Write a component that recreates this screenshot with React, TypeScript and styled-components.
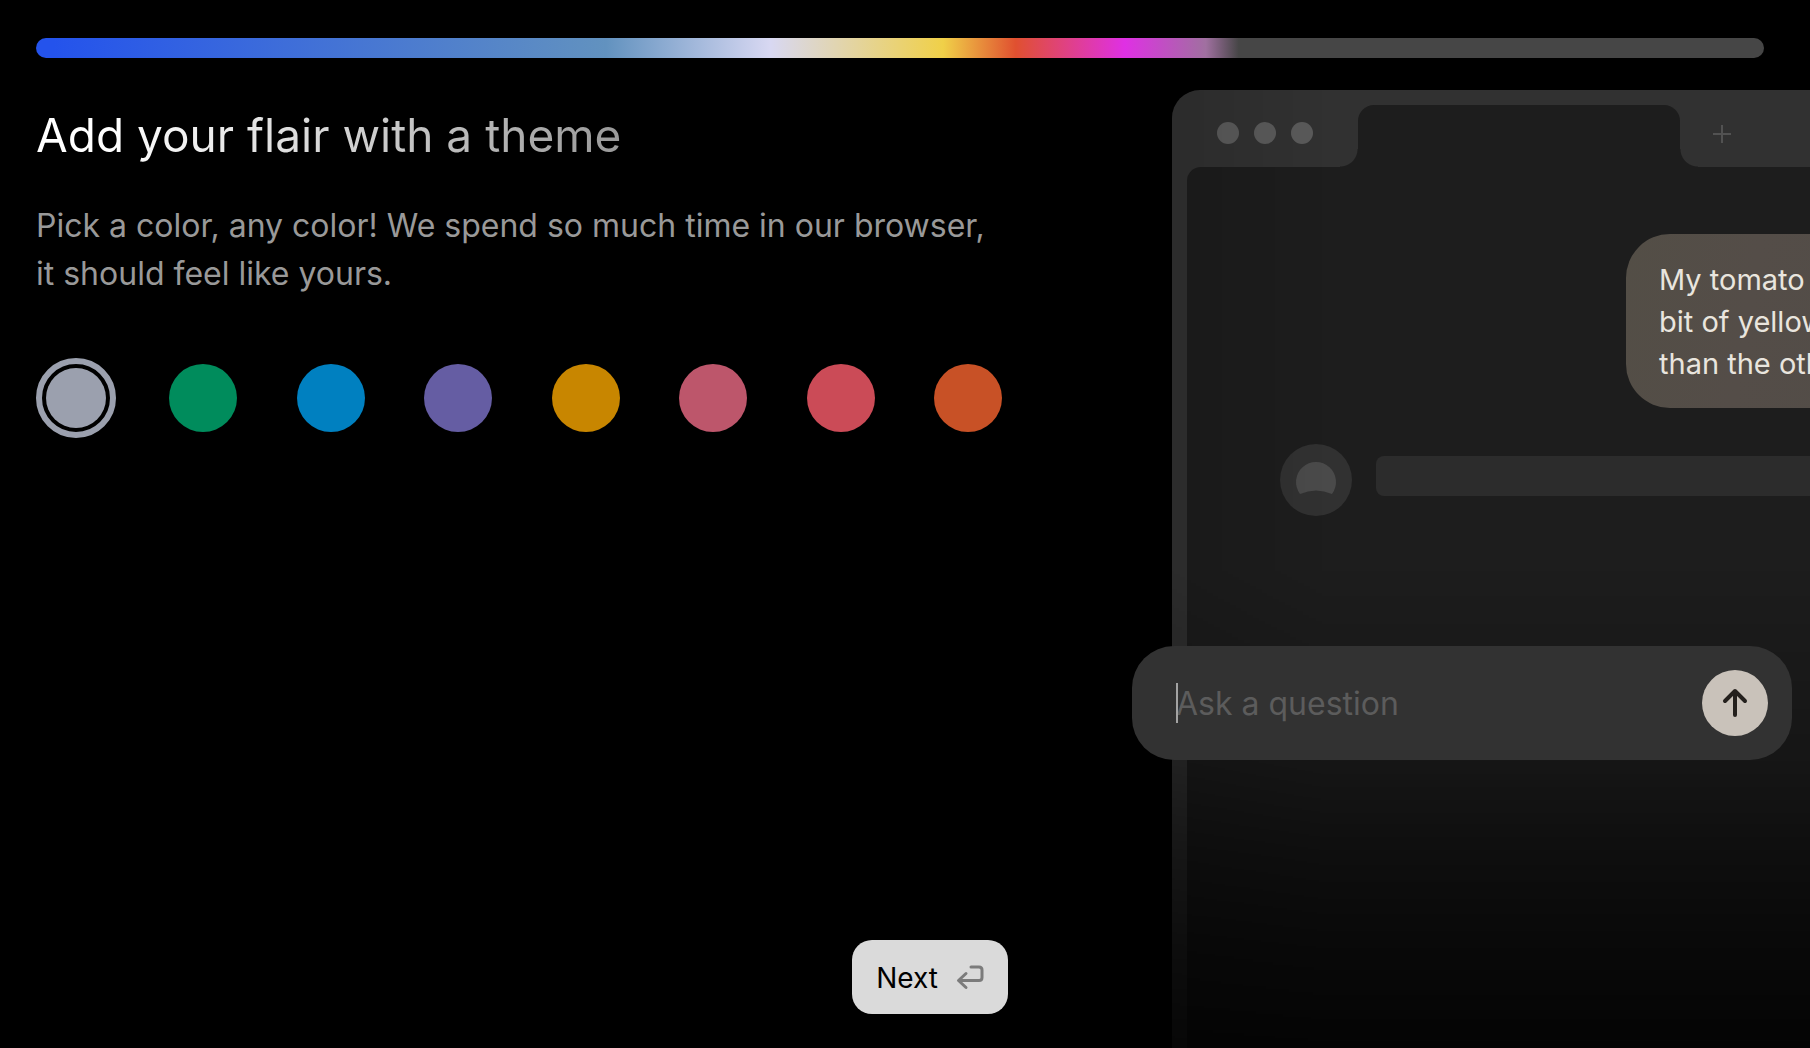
import React, { useState } from "react";
import styled, { createGlobalStyle } from "styled-components";

const GlobalStyle = createGlobalStyle`
  *, *::before, *::after { box-sizing: border-box; }
  body {
    margin: 0;
    background: #000;
    color: #fff;
    font-family: Inter, "Liberation Sans", sans-serif;
  }
  button, input { font: inherit; }
`;

const Page = styled.div`
  display: flex;
  flex-direction: column;
  min-height: 100vh;
  overflow: hidden;
  background: #000;
`;

const Header = styled.header`
  padding: 38px 46px 0 36px;
`;

const Progress = styled.div`
  height: 20px;
  border-radius: 10px;
  background: linear-gradient(
    90deg,
    #2453ec 1%,
    #6292bf 33%,
    #d8d8f2 42.5%,
    #f0d048 52.5%,
    #e05030 56.7%,
    #df30e4 63%,
    #a070a0 67.7%,
    #464646 69.6%
  );
`;

const Main = styled.main`
  flex: 1;
  display: grid;
  grid-template-columns: minmax(0, 972fr) minmax(0, 638fr);
  column-gap: 164px;
  padding: 32px 0 0 36px;
`;

const Intro = styled.section`
  display: flex;
  flex-direction: column;
  align-items: flex-start;
  padding: 16px 0 34px;
`;

const Title = styled.h1`
  margin: 0;
  font-size: 46px;
  line-height: 58px;
  font-weight: 400;
  color: transparent;
  background: linear-gradient(90deg, #fff 12%, #dcdcdc 45%, #999 100%);
  background-clip: text;
`;

const Lead = styled.p`
  margin: 38px 0 60px;
  font-size: 32px;
  line-height: 48px;
  color: #999;
`;

const Swatches = styled.fieldset`
  display: flex;
  justify-content: space-between;
  width: 100%;
  margin: 0;
  padding: 0;
  border: 0;
`;

const SwatchLabel = styled.label`
  display: flex;
  align-items: center;
  justify-content: center;
  width: 80px;
  height: 80px;
  cursor: pointer;
`;

const SwatchInput = styled.input<{ $color: string }>`
  appearance: none;
  width: 68px;
  height: 68px;
  margin: 0;
  border-radius: 50%;
  background: ${(p) => p.$color};

  &:checked {
    width: 80px;
    height: 80px;
    padding: 4px;
    border: 6px solid ${(p) => p.$color};
    background-clip: content-box;
  }
`;

const NextButton = styled.button`
  display: flex;
  align-items: center;
  gap: 18px;
  align-self: flex-end;
  height: 74px;
  margin-top: auto;
  padding: 2px 24px 0;
  border: 0;
  border-radius: 20px;
  background: #dadada;
  color: #000;
  font-size: 28px;
  line-height: 36px;
`;

const Preview = styled.section`
  position: relative;
  display: flex;
  flex-direction: column;
  border-radius: 28px 0 0 0;
  background: #313131;

  &::after {
    content: "";
    position: absolute;
    inset: 0;
    border-radius: inherit;
    pointer-events: none;
    background:
      linear-gradient(90deg, rgba(0, 0, 0, 0.1), transparent 24%),
      linear-gradient(
        180deg,
        transparent 50%,
        rgba(0, 0, 0, 0.24) 70%,
        rgba(0, 0, 0, 0.5) 80%,
        rgba(0, 0, 0, 0.7) 90%,
        rgba(0, 0, 0, 0.84) 100%
      );
  }
`;

const TabBar = styled.div`
  display: flex;
  align-items: flex-end;
  height: 77px;
`;

const WindowDots = styled.div`
  display: flex;
  align-items: center;
  align-self: center;
  gap: 15px;
  width: 186px;
  padding: 8px 0 0 45px;
`;

const Dot = styled.span`
  width: 22px;
  height: 22px;
  border-radius: 50%;
  background: #5a5a5a;
`;

const Tab = styled.div`
  position: relative;
  flex: none;
  width: 322px;
  height: 62px;
  border-radius: 16px 16px 0 0;
  background: #1d1d1d;

  &::before,
  &::after {
    content: "";
    position: absolute;
    bottom: 0;
    width: 18px;
    height: 18px;
  }
  &::before {
    right: 100%;
    background: radial-gradient(circle at 0 0, transparent 17px, #1d1d1d 18px);
  }
  &::after {
    left: 100%;
    background: radial-gradient(circle at 100% 0, transparent 17px, #1d1d1d 18px);
  }
`;

const NewTab = styled.button`
  display: flex;
  align-self: center;
  margin: 10px 0 0 33px;
  padding: 0;
  border: 0;
  background: none;
  color: #525252;
`;

const Chat = styled.div`
  flex: 1;
  margin-left: 15px;
  padding-top: 67px;
  border-radius: 14px 0 0 0;
  background: #1d1d1d;
`;

const Clip = styled.div`
  overflow: hidden;
  padding-left: 439px;
`;

const Bubble = styled.p`
  width: 420px;
  height: 174px;
  margin: 0;
  padding: 25px 33px;
  border-radius: 44px;
  background: linear-gradient(100deg, #534e46, #544d48 30%, #504c46);
  color: #e9e5de;
  font-size: 29px;
  line-height: 42px;
  white-space: nowrap;
`;

const Reply = styled.div`
  display: flex;
  align-items: center;
  gap: 24px;
  margin: 36px 0 130px;
  padding-left: 93px;
`;

const Avatar = styled.div`
  display: flex;
  flex: none;
  width: 72px;
  height: 72px;
  border-radius: 50%;
  background: #313131;
`;

const Skeleton = styled.div`
  flex: 1;
  height: 40px;
  margin-bottom: 8px;
  border-radius: 8px 0 0 8px;
  background: #2c2c2c;
`;

const Composer = styled.form`
  position: relative;
  z-index: 1;
  display: flex;
  align-items: center;
  height: 114px;
  margin: 0 18px 0 -55px;
  padding: 0 24px 0 44px;
  border-radius: 42px;
  background: #323232;
`;

const Caret = styled.span`
  position: absolute;
  left: 44px;
  width: 2px;
  height: 40px;
  background: #a3a3a3;
`;

const Question = styled.input`
  flex: 1;
  min-width: 0;
  height: 44px;
  padding: 0;
  border: 0;
  outline: 0;
  background: none;
  color: #e9e5de;
  font-size: 32px;

  &::placeholder {
    color: #5c5c5c;
    opacity: 1;
  }
`;

const Send = styled.button`
  display: flex;
  align-items: center;
  justify-content: center;
  flex: none;
  width: 66px;
  height: 66px;
  padding: 0;
  border: 0;
  border-radius: 50%;
  background: #c9c2ba;
  color: #24201d;
`;

const themes = [
  { name: "Gray", color: "#9ba0ae" },
  { name: "Green", color: "#008c5c" },
  { name: "Blue", color: "#0080c0" },
  { name: "Purple", color: "#655da3" },
  { name: "Amber", color: "#c88600" },
  { name: "Pink", color: "#bd566b" },
  { name: "Red", color: "#cb4b57" },
  { name: "Orange", color: "#c85126" },
];

export default function App() {
  const [theme, setTheme] = useState("Gray");

  return (
    <Page>
      <GlobalStyle />
      <Header>
        <Progress role="progressbar" aria-label="Setup progress" aria-valuenow={69} />
      </Header>
      <Main>
        <Intro>
          <Title>Add your flair with a theme</Title>
          <Lead>
            Pick a color, any color! We spend so much time in our browser,
            <br />
            it should feel like yours.
          </Lead>
          <Swatches aria-label="Theme color">
            {themes.map((t) => (
              <SwatchLabel key={t.name}>
                <SwatchInput
                  type="radio"
                  name="theme"
                  aria-label={t.name}
                  $color={t.color}
                  checked={theme === t.name}
                  onChange={() => setTheme(t.name)}
                />
              </SwatchLabel>
            ))}
          </Swatches>
          <NextButton type="button">
            Next
            <svg width="28" height="26" viewBox="0 0 28 26" fill="none" stroke="#7b7b7b" strokeWidth="3" strokeLinecap="round" strokeLinejoin="round" aria-hidden="true">
              <path d="M10 8.5 2.5 15.5 10 22.5M3 15.5H23Q26 15.5 26 12.5V5Q26 2 23 2H15" />
            </svg>
          </NextButton>
        </Intro>
        <Preview>
          <TabBar>
            <WindowDots>
              <Dot />
              <Dot />
              <Dot />
            </WindowDots>
            <Tab />
            <NewTab type="button" aria-label="New tab">
              <svg width="18" height="18" viewBox="0 0 18 18" stroke="currentColor" strokeWidth="2" aria-hidden="true">
                <path d="M9 0V18M0 9H18" />
              </svg>
            </NewTab>
          </TabBar>
          <Chat>
            <Clip>
              <Bubble>
                My tomato
                <br />
                bit of yellow
                <br />
                than the other
              </Bubble>
            </Clip>
            <Reply>
              <Avatar>
                <svg width="72" height="72" viewBox="0 0 72 72" aria-hidden="true">
                  <path d="M20 50A20 20 0 1 1 52 50Q36 43 20 50Z" fill="#4a4a4a" />
                </svg>
              </Avatar>
              <Skeleton />
            </Reply>
            <Composer onSubmit={(e) => e.preventDefault()}>
              <Caret />
              <Question type="text" aria-label="Ask a question" placeholder="Ask a question" />
              <Send type="submit" aria-label="Send">
                <svg width="28" height="32" viewBox="0 0 28 32" fill="none" stroke="currentColor" strokeWidth="4" strokeLinecap="round" strokeLinejoin="round" aria-hidden="true">
                  <path d="M14 28V4M4 14 14 4 24 14" />
                </svg>
              </Send>
            </Composer>
          </Chat>
        </Preview>
      </Main>
    </Page>
  );
}
